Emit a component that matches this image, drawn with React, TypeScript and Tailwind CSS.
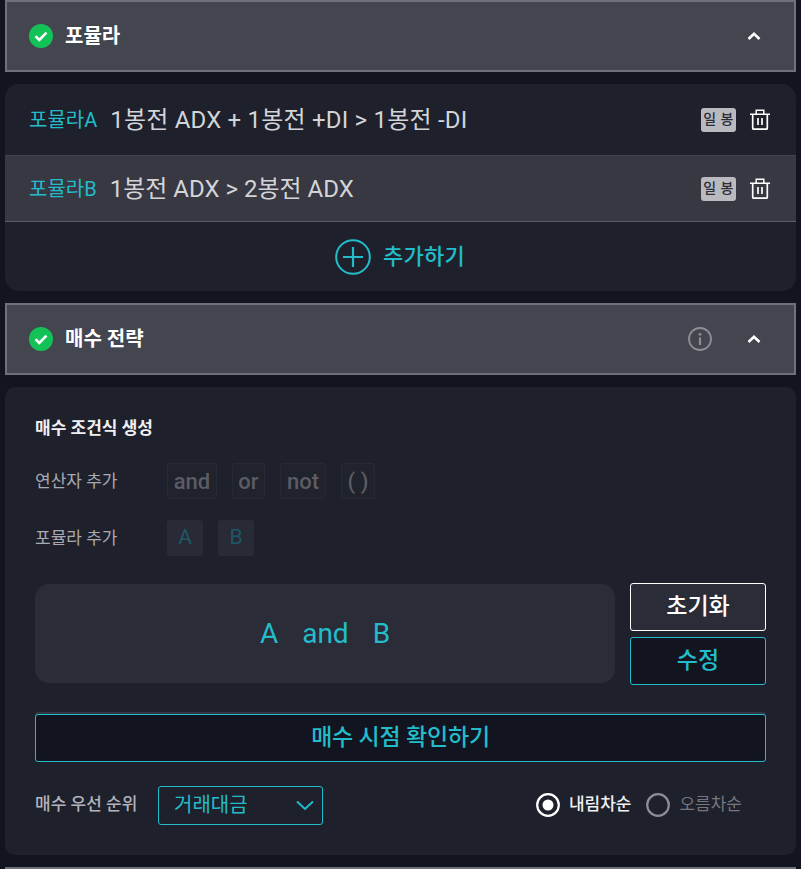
import React from "react";

function Check() {
  return (
    <svg width="24" height="24" viewBox="0 0 24 24" className="shrink-0">
      <circle cx="12" cy="12" r="12" fill="#13c257" />
      <path d="M6.5 12.3l3.8 3.6 7.2-7.2" fill="none" stroke="#fff" strokeWidth="2.6" />
    </svg>
  );
}

function Chevron() {
  return (
    <svg width="14" height="10" viewBox="0 0 14 10" className="shrink-0">
      <path d="M1.5 8L7 2.8 12.5 8" fill="none" stroke="#fff" strokeWidth="2.6" />
    </svg>
  );
}

function Trash() {
  return (
    <svg width="20" height="21" viewBox="0 0 20 21" className="shrink-0" fill="none" stroke="#fff" strokeWidth="1.5">
      <path d="M0 5.2h20" />
      <path d="M6.2 5V1.2h7.6V5" />
      <path d="M2.7 5v14.2c0 .6.4 1 1 1h12.6c.6 0 1-.4 1-1V5" strokeWidth="1.7" />
      <path d="M8 9v7M12 9v7" strokeWidth="1.7" />
    </svg>
  );
}

function Header({ title, info }: { title: string; info?: boolean }) {
  return (
    <div className="h-[72px] w-[791px] ml-[5px] border-2 border-[#6f7079] bg-[#44464f] flex items-center pl-[22px] pr-[33px]">
      <Check />
      <span className="ml-3 text-[20px] font-bold text-white">{title}</span>
      {info && (
        <svg width="24" height="24" viewBox="0 0 24 24" className="ml-auto mr-[35px]" fill="none">
          <circle cx="12" cy="12" r="11" stroke="#8d8e95" strokeWidth="1.8" />
          <circle cx="12" cy="7.3" r="1.4" fill="#8d8e95" />
          <path d="M12 10.5v7.5" stroke="#8d8e95" strokeWidth="2.2" />
        </svg>
      )}
      <div className={info ? "" : "ml-auto"}>
        <Chevron />
      </div>
    </div>
  );
}

function FormulaRow({ name, text, alt }: { name: string; text: string; alt?: boolean }) {
  return (
    <div className={`flex items-center pl-6 pr-[26px] ${alt ? "h-[67px] bg-[#373842] border-b border-[#5b5c65] border-t border-t-[#41424b]" : "h-[71px]"}`}>
      <span className="text-[20px] text-[#22bccb]">{name}</span>
      <span className={`ml-[13px] text-[24px] text-[#d3d4d8] ${alt ? "" : "tracking-[0.2px]"}`}>{text}</span>
      <span className="ml-auto w-[35px] h-6 rounded-[3px] bg-[#b9bac0] text-[#2b2c36] text-[14px] font-medium flex items-center justify-center whitespace-nowrap tracking-[0.5px]">일 봉</span>
      <span className="ml-[14px]"><Trash /></span>
    </div>
  );
}

function OpBtn({ label, w }: { label: string; w: string }) {
  return (
    <div className={`${w} h-9 rounded-[3px] border border-[#272933] bg-[#20222c] text-[#5b5c66] text-[22px] font-medium flex items-center justify-center`}>
      {label}
    </div>
  );
}

export default function App() {
  return (
    <div
      className="w-[801px] h-[869px] overflow-hidden bg-[#12141f]"
      style={{ fontFamily: 'Roboto, "Noto Sans CJK KR", sans-serif' }}
    >
      <Header title="포뮬라" />
      <div className="mt-3 ml-[5px] w-[791px] h-[207px] rounded-[14px] bg-[#1e202b] overflow-hidden">
        <FormulaRow name="포뮬라A" text="1봉전 ADX + 1봉전 +DI > 1봉전 -DI" />
        <FormulaRow name="포뮬라B" text="1봉전 ADX > 2봉전 ADX" alt />
        <div className="h-[69px] flex items-center justify-center gap-[12px] pr-px">
          <svg width="36" height="36" viewBox="0 0 36 36" fill="none" stroke="#22bccb" strokeWidth="2">
            <circle cx="18" cy="18" r="16.8" />
            <path d="M8 18h20M18 8v20" strokeWidth="2.2" />
          </svg>
          <span className="text-[22px] text-[#22bccb] font-medium tracking-[0.2px]">추가하기</span>
        </div>
      </div>
      <div className="mt-3">
        <Header title="매수 전략" info />
      </div>
      <div className="mt-[12px] ml-[5px] w-[791px] h-[468px] rounded-[10px] bg-[#1e202b] px-[30px] pt-[29px]">
        <div className="text-[17px] font-bold text-[#f0f0f2] leading-6">매수 조건식 생성</div>
        <div className="mt-[23px] flex items-center h-9">
          <span className="w-[132px] text-[17px] text-[#a9aab0] pt-px">연산자 추가</span>
          <div className="flex gap-[15px]">
            <OpBtn label="and" w="w-[50px]" />
            <OpBtn label="or" w="w-[33px]" />
            <OpBtn label="not" w="w-[46px]" />
            <OpBtn label="( )" w="w-[34px]" />
          </div>
        </div>
        <div className="mt-[21px] flex items-center h-9">
          <span className="w-[132px] text-[17px] text-[#a9aab0] pt-px">포뮬라 추가</span>
          <div className="flex gap-[15px]">
            <div className="w-9 h-9 rounded-[3px] bg-[#282a35] text-[#1f5764] text-[21px] flex items-center justify-center">A</div>
            <div className="w-9 h-9 rounded-[3px] bg-[#282a35] text-[#1f5764] text-[21px] flex items-center justify-center">B</div>
          </div>
        </div>
        <div className="mt-[28px] flex items-start justify-between">
          <div className="w-[580px] h-[99px] rounded-[14px] bg-[#2a2c38] flex items-center justify-center gap-[24px] pt-px text-[28px] text-[#22bccb]">
            <span>A</span>
            <span>and</span>
            <span>B</span>
          </div>
          <div className="w-[136px] -mt-px flex flex-col gap-[6px]">
            <div className="h-12 rounded-[3px] border border-white bg-[#2a2c38] text-white text-[23px] font-medium flex items-center justify-center pt-px">초기화</div>
            <div className="h-12 rounded-[3px] border border-[#22bccb] bg-[#12141f] text-[#22bccb] text-[23px] font-medium flex items-center justify-center pt-px">수정</div>
          </div>
        </div>
        <div className="mt-[29px] h-12 rounded-[3px] border border-[#22bccb] shadow-[0_-2px_0_#343641] bg-[#12141f] text-[#22bccb] text-[23px] font-medium tracking-[-0.2px] flex items-center justify-center">
          매수 시점 확인하기
        </div>
        <div className="mt-[23px] flex items-center h-10">
          <span className="w-[123px] text-[17px] font-medium text-[#b3b4ba] whitespace-nowrap">매수 우선 순위</span>
          <div className="w-[165px] h-[39px] rounded-[3px] border border-[#22bccb] flex items-center justify-between pl-[15px] pr-[8px] text-[#22bccb] text-[20px]">
            <span>거래대금</span>
            <svg width="18" height="11" viewBox="0 0 18 11" fill="none" stroke="#22bccb" strokeWidth="2">
              <path d="M1 1.5l8 7.5 8-7.5" />
            </svg>
          </div>
          <div className="ml-auto mr-[24px] flex items-center">
            <svg width="24" height="24" viewBox="0 0 24 24" fill="none">
              <circle cx="12" cy="12" r="10.8" stroke="#fff" strokeWidth="2.2" />
              <circle cx="12" cy="12" r="5.5" fill="#fff" />
            </svg>
            <span className="ml-[9px] text-[17px] font-medium text-[#f0f0f2]">내림차순</span>
            <svg width="24" height="24" viewBox="0 0 24 24" fill="none" className="ml-[15px]">
              <circle cx="12" cy="12" r="10.8" stroke="#8d8e95" strokeWidth="2.2" />
            </svg>
            <span className="ml-[9px] text-[17px] text-[#75767e]">오름차순</span>
          </div>
        </div>
      </div>
      <div className="mt-3 ml-[5px] w-[791px] h-[4px] bg-[#6f7079]" />
    </div>
  );
}
